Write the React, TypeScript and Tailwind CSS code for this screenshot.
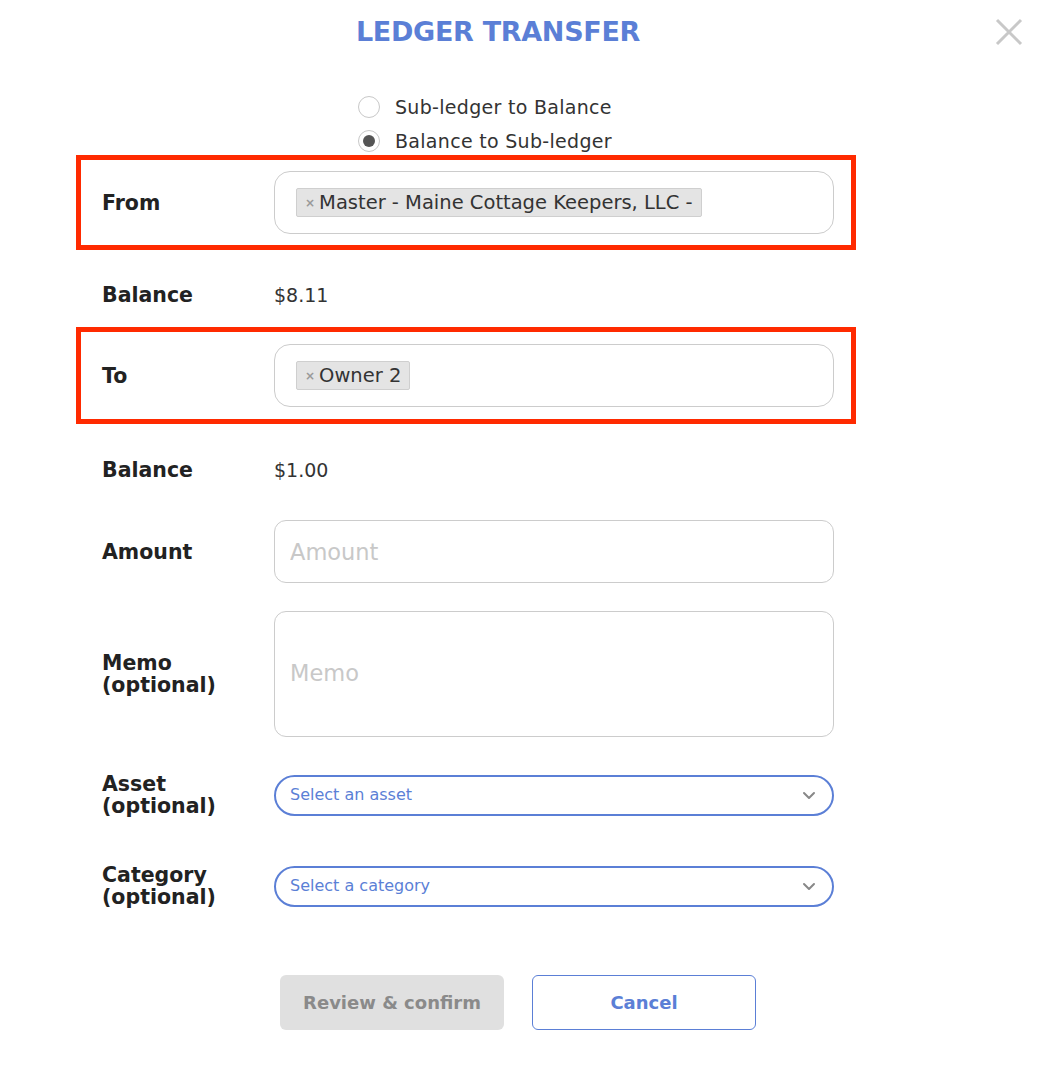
import React, { useState } from 'react';

const font = { fontFamily: '"DejaVu Sans", "Open Sans", sans-serif' };

const Chip: React.FC<{ label: string }> = ({ label }) => (
  <span className="inline-flex h-[29px] items-center gap-[4px] rounded-[2px] border border-[#cfcfcf] bg-[#e4e4e4] pl-[8px] pr-[8px] text-[19.5px] text-[#333]">
    <span className="text-[12px] font-bold leading-none text-[#999]">×</span>
    {label}
  </span>
);

const Row: React.FC<{ label: React.ReactNode; highlight?: boolean; className?: string; children: React.ReactNode }> = ({
  label,
  highlight,
  className = '',
  children,
}) => (
  <div
    className={`flex items-center border-[5px] pl-[21px] pr-[17px] ${highlight ? 'border-[#ff2a00]' : 'border-transparent'} ${className}`}
  >
    <div className="w-[172px] shrink-0 text-[20.5px] font-bold leading-[22px] text-[#222]">{label}</div>
    <div className="flex-1">{children}</div>
  </div>
);

const Chevron = () => (
  <svg width="14" height="9" viewBox="0 0 14 9" fill="none">
    <path d="M2 2l5 5 5-5" stroke="#888" strokeWidth="2" strokeLinecap="round" strokeLinejoin="round" />
  </svg>
);

export default function App() {
  const [direction, setDirection] = useState<'sub' | 'bal'>('bal');

  return (
    <div className="relative min-h-[1071px] w-[1040px] bg-white" style={font}>
      {/* close */}
      <button className="absolute right-[17px] top-[18px] h-[28px] w-[28px]" aria-label="Close">
        <svg width="28" height="28" viewBox="0 0 28 28">
          <path d="M2 2l24 24M26 2L2 26" stroke="#c8c8c8" strokeWidth="3" />
        </svg>
      </button>

      <h1 className="pr-[44px] pt-[12px] text-center text-[27px] font-bold leading-[40px] tracking-[-0.3px] text-[#5b7fd6]">
        LEDGER TRANSFER
      </h1>

      {/* direction */}
      <div className="ml-[358px] mt-[44px] flex flex-col gap-[12px]">
        {[
          { key: 'sub' as const, text: 'Sub-ledger to Balance' },
          { key: 'bal' as const, text: 'Balance to Sub-ledger' },
        ].map(opt => (
          <label key={opt.key} className="flex h-[22px] cursor-pointer items-center gap-[15px] text-[19px] tracking-[0.3px] text-[#333]">
            <span
              onClick={() => setDirection(opt.key)}
              className="flex h-[22px] w-[22px] items-center justify-center rounded-full border border-[#c8c8c8]"
            >
              {direction === opt.key && <span className="h-[12px] w-[12px] rounded-full bg-[#555]" />}
            </span>
            {opt.text}
          </label>
        ))}
      </div>

      <div className="ml-[76px] mt-[3px] flex w-[780px] flex-col">
        <Row label="From" highlight className="py-[11px]">
          <div className="flex h-[63px] items-center rounded-[16px] border border-[#cccccc] px-[21px]">
            <Chip label="Master - Maine Cottage Keepers, LLC -" />
          </div>
        </Row>

        <Row label="Balance" className="mt-[20px]">
          <div className="flex h-[40px] items-center text-[19px] text-[#333]">$8.11</div>
        </Row>

        <Row label="To" highlight className="mt-[7px] py-[12px]">
          <div className="flex h-[63px] items-center rounded-[16px] border border-[#cccccc] px-[21px]">
            <Chip label="Owner 2" />
          </div>
        </Row>

        <Row label="Balance" className="mt-[21px]">
          <div className="flex h-[40px] items-center text-[19px] text-[#333]">$1.00</div>
        </Row>

        <Row label="Amount" className="mt-[20px]">
          <input
            placeholder="Amount"
            className="h-[63px] w-full rounded-[12px] border border-[#cccccc] px-[15px] text-[22.5px] text-[#333] outline-none placeholder:text-[#c8c8c8]"
          />
        </Row>

        <Row label={<>Memo<br />(optional)</>} className="mt-[18px]">
          <div className="flex h-[126px] items-center rounded-[12px] border border-[#cccccc] px-[15px] text-[22.5px] text-[#c8c8c8]">
            Memo
          </div>
        </Row>

        <Row label={<>Asset<br />(optional)</>} className="mt-[26px]">
          <div className="flex h-[41px] items-center justify-between rounded-full border-2 border-[#5b7fd6] pl-[14px] pr-[16px] text-[16px] text-[#5b7fd6]">
            Select an asset
            <Chevron />
          </div>
        </Row>

        <Row label={<>Category<br />(optional)</>} className="mt-[37px]">
          <div className="flex h-[41px] items-center justify-between rounded-full border-2 border-[#5b7fd6] pl-[14px] pr-[16px] text-[16px] text-[#5b7fd6]">
            Select a category
            <Chevron />
          </div>
        </Row>
      </div>

      <div className="ml-[280px] mt-[62px] flex gap-[28px]">
        <button disabled className="h-[55px] w-[224px] rounded-[6px] bg-[#e0e0e0] text-[18px] font-bold text-[#8a8a8a]">
          Review &amp; confirm
        </button>
        <button className="h-[55px] w-[224px] rounded-[6px] border border-[#5b7fd6] bg-white text-[18px] font-bold text-[#5b7fd6]">
          Cancel
        </button>
      </div>
    </div>
  );
}
